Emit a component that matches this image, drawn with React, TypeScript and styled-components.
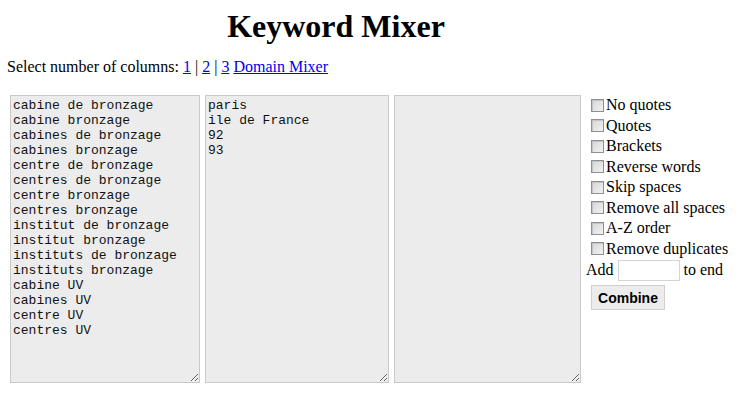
import * as React from "react"
import styled, { createGlobalStyle } from "styled-components"

const GlobalStyle = createGlobalStyle`
  body {
    margin: 8px 8px 8px 7px;
    background: #fff;
    color: #000;
    font-family: "Liberation Serif", "Times New Roman", serif;
    font-size: 16px;
  }
`

const Title = styled.h1`
  width: 658px;
  margin: 0 0 13px;
  font-size: 32px;
  font-weight: 700;
  text-align: center;
  line-height: 37px;
`

const ColumnPicker = styled.p`
  margin: 0 0 19px;
  line-height: 18px;

  a {
    color: #0000ee;
    text-decoration: underline;
  }
`

const Mixer = styled.div`
  display: flex;
  align-items: flex-start;
  column-gap: 5px;
  padding-left: 3px;
`

const WordBox = styled.textarea<{ $width: number }>`
  box-sizing: border-box;
  width: ${(p) => p.$width}px;
  height: 288px;
  margin: 0;
  padding: 2px;
  border: 1px solid #c9c9c9;
  background: #ececec;
  color: #111;
  font-family: "Liberation Mono", "Courier New", monospace;
  font-size: 13px;
  line-height: 15px;
  overflow: hidden;
  resize: both;
`

const Options = styled.div`
  display: flex;
  flex-direction: column;
`

const Option = styled.label`
  display: flex;
  align-items: center;
  height: 20.5px;
  white-space: nowrap;
`

const Check = styled.input`
  appearance: none;
  box-sizing: border-box;
  width: 13px;
  height: 13px;
  margin: 0 2px 0 5px;
  border: 1px solid #8f8f8f;
  background: linear-gradient(135deg, #d6d6d6 0%, #f2f2f2 100%);
  box-shadow: inset 1px 1px 0 #c4c4c4;
`

const AddRow = styled.div`
  display: flex;
  align-items: center;
  gap: 4px;
  height: 24px;
  margin-top: -1px;
`

const Suffix = styled.input`
  box-sizing: border-box;
  width: 62px;
  height: 21px;
  margin: 0;
  border: 1px solid #d4d4d4;
  background: #fff;
`

const Combine = styled.button`
  align-self: flex-start;
  box-sizing: border-box;
  width: 74px;
  height: 25px;
  margin: 3px 0 0 5px;
  padding: 0;
  border: 1px solid #cfcfcf;
  background: #ececec;
  color: #000;
  font-family: "Liberation Sans", Arial, sans-serif;
  font-size: 14px;
  font-weight: 700;
`

const keywords = [
  "cabine de bronzage",
  "cabine bronzage",
  "cabines de bronzage",
  "cabines bronzage",
  "centre de bronzage",
  "centres de bronzage",
  "centre bronzage",
  "centres bronzage",
  "institut de bronzage",
  "institut bronzage",
  "instituts de bronzage",
  "instituts bronzage",
  "cabine UV",
  "cabines UV",
  "centre UV",
  "centres UV",
].join("\n")

const places = ["paris", "ile de France", "92", "93"].join("\n")

const options = [
  "No quotes",
  "Quotes",
  "Brackets",
  "Reverse words",
  "Skip spaces",
  "Remove all spaces",
  "A-Z order",
  "Remove duplicates",
]

export default function App() {
  return (
    <>
      <GlobalStyle />
      <Title>Keyword Mixer</Title>
      <ColumnPicker>
        Select number of columns: <a href="#">1</a> | <a href="#">2</a> |{" "}
        <a href="#">3</a> <a href="#">Domain Mixer</a>
      </ColumnPicker>
      <Mixer>
        <WordBox $width={190} defaultValue={keywords} spellCheck={false} />
        <WordBox $width={184} defaultValue={places} spellCheck={false} />
        <WordBox $width={187} defaultValue="" spellCheck={false} />
        <Options>
          {options.map((label) => (
            <Option key={label}>
              <Check type="checkbox" />
              {label}
            </Option>
          ))}
          <AddRow>
            Add <Suffix type="text" /> to end
          </AddRow>
          <Combine type="button">Combine</Combine>
        </Options>
      </Mixer>
    </>
  )
}
